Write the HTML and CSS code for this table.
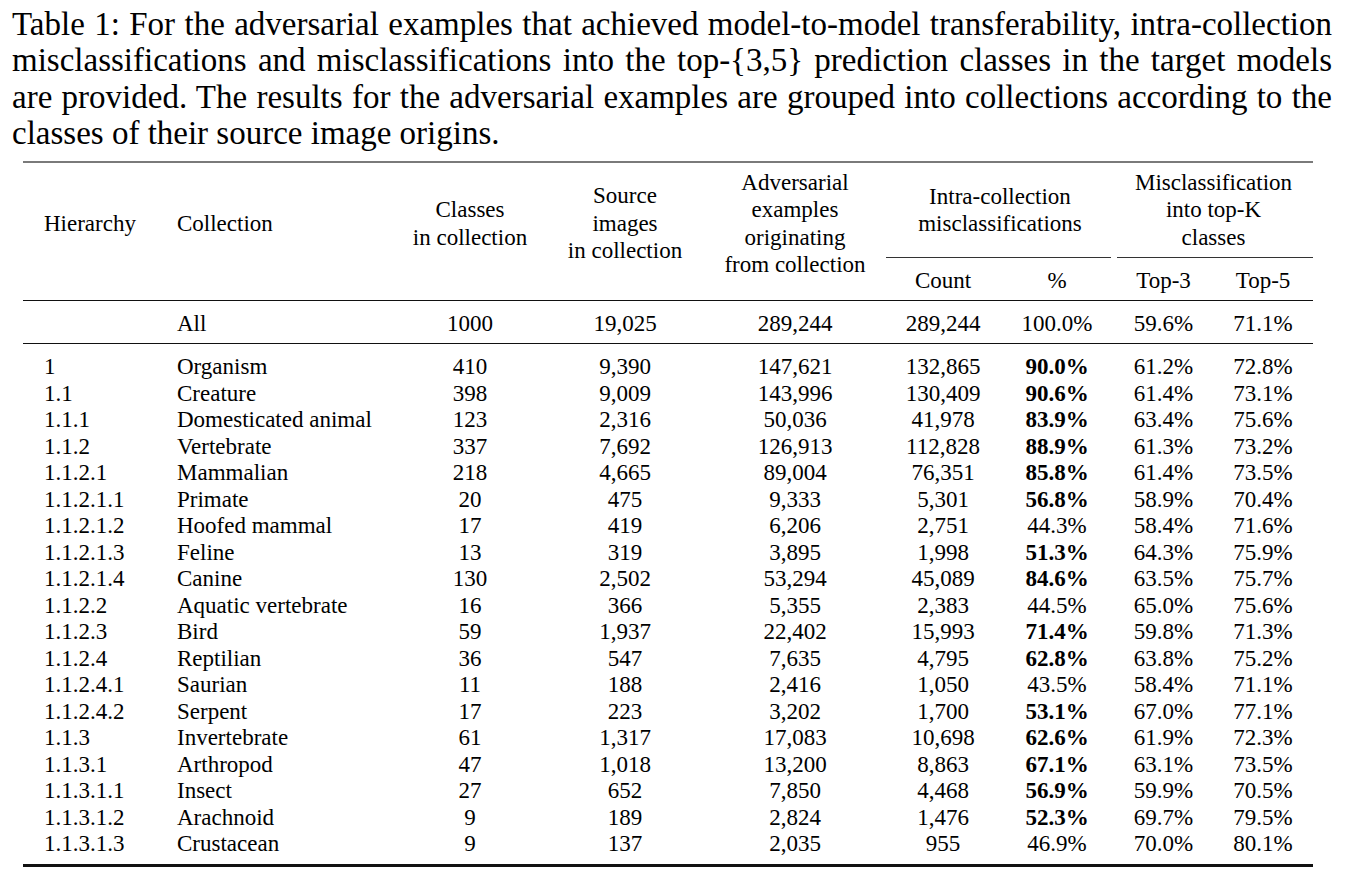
FILE: index.html
```html
<!DOCTYPE html>
<html lang="en">
<head>
<meta charset="utf-8">
<title>Table 1</title>
<link rel="stylesheet" href="styles.css">
</head>
<body>
<div class="page">
  <p class="caption">Table 1: For the adversarial examples that achieved model-to-model transferability, intra-collection misclassifications and misclassifications into the top-{3,5} prediction classes in the target models are provided. The results for the adversarial examples are grouped into collections according to the classes of their source image origins.</p>
  <table class="results">
    <colgroup>
      <col class="c-hier">
      <col class="c-coll">
      <col class="c-classes">
      <col class="c-source">
      <col class="c-adv">
      <col class="c-count">
      <col class="c-pct">
      <col class="c-top3">
      <col class="c-top5">
    </colgroup>
    <thead>
      <tr class="head-main">
        <th rowspan="2" class="left hier span2">Hierarchy</th>
        <th rowspan="2" class="left coll span2">Collection</th>
        <th rowspan="2" class="span2">Classes<br>in collection</th>
        <th rowspan="2" class="span2">Source<br>images<br>in collection</th>
        <th rowspan="2" class="span2">Adversarial<br>examples<br>originating<br>from collection</th>
        <th colspan="2" class="group count">Intra-collection<br>misclassifications</th>
        <th colspan="2" class="group">Misclassification<br>into top-K<br>classes</th>
      </tr>
      <tr class="head-sub">
        <th class="sub sub-count count">Count</th>
        <th class="sub sub-pct">%</th>
        <th class="sub sub-top3">Top-3</th>
        <th class="sub sub-top5">Top-5</th>
      </tr>
    </thead>
    <tbody class="total">
      <tr>
        <td class="left hier"></td>
        <td class="left coll">All</td>
        <td>1000</td>
        <td>19,025</td>
        <td>289,244</td>
        <td class="count">289,244</td>
        <td>100.0%</td>
        <td>59.6%</td>
        <td>71.1%</td>
      </tr>
    </tbody>
    <tbody class="data">
      <tr><td class="left hier">1</td><td class="left coll">Organism</td><td>410</td><td>9,390</td><td>147,621</td><td class="count">132,865</td><td><b>90.0%</b></td><td>61.2%</td><td>72.8%</td></tr>
      <tr><td class="left hier">1.1</td><td class="left coll">Creature</td><td>398</td><td>9,009</td><td>143,996</td><td class="count">130,409</td><td><b>90.6%</b></td><td>61.4%</td><td>73.1%</td></tr>
      <tr><td class="left hier">1.1.1</td><td class="left coll">Domesticated animal</td><td>123</td><td>2,316</td><td>50,036</td><td class="count">41,978</td><td><b>83.9%</b></td><td>63.4%</td><td>75.6%</td></tr>
      <tr><td class="left hier">1.1.2</td><td class="left coll">Vertebrate</td><td>337</td><td>7,692</td><td>126,913</td><td class="count">112,828</td><td><b>88.9%</b></td><td>61.3%</td><td>73.2%</td></tr>
      <tr><td class="left hier">1.1.2.1</td><td class="left coll">Mammalian</td><td>218</td><td>4,665</td><td>89,004</td><td class="count">76,351</td><td><b>85.8%</b></td><td>61.4%</td><td>73.5%</td></tr>
      <tr><td class="left hier">1.1.2.1.1</td><td class="left coll">Primate</td><td>20</td><td>475</td><td>9,333</td><td class="count">5,301</td><td><b>56.8%</b></td><td>58.9%</td><td>70.4%</td></tr>
      <tr><td class="left hier">1.1.2.1.2</td><td class="left coll">Hoofed mammal</td><td>17</td><td>419</td><td>6,206</td><td class="count">2,751</td><td>44.3%</td><td>58.4%</td><td>71.6%</td></tr>
      <tr><td class="left hier">1.1.2.1.3</td><td class="left coll">Feline</td><td>13</td><td>319</td><td>3,895</td><td class="count">1,998</td><td><b>51.3%</b></td><td>64.3%</td><td>75.9%</td></tr>
      <tr><td class="left hier">1.1.2.1.4</td><td class="left coll">Canine</td><td>130</td><td>2,502</td><td>53,294</td><td class="count">45,089</td><td><b>84.6%</b></td><td>63.5%</td><td>75.7%</td></tr>
      <tr><td class="left hier">1.1.2.2</td><td class="left coll">Aquatic vertebrate</td><td>16</td><td>366</td><td>5,355</td><td class="count">2,383</td><td>44.5%</td><td>65.0%</td><td>75.6%</td></tr>
      <tr><td class="left hier">1.1.2.3</td><td class="left coll">Bird</td><td>59</td><td>1,937</td><td>22,402</td><td class="count">15,993</td><td><b>71.4%</b></td><td>59.8%</td><td>71.3%</td></tr>
      <tr><td class="left hier">1.1.2.4</td><td class="left coll">Reptilian</td><td>36</td><td>547</td><td>7,635</td><td class="count">4,795</td><td><b>62.8%</b></td><td>63.8%</td><td>75.2%</td></tr>
      <tr><td class="left hier">1.1.2.4.1</td><td class="left coll">Saurian</td><td>11</td><td>188</td><td>2,416</td><td class="count">1,050</td><td>43.5%</td><td>58.4%</td><td>71.1%</td></tr>
      <tr><td class="left hier">1.1.2.4.2</td><td class="left coll">Serpent</td><td>17</td><td>223</td><td>3,202</td><td class="count">1,700</td><td><b>53.1%</b></td><td>67.0%</td><td>77.1%</td></tr>
      <tr><td class="left hier">1.1.3</td><td class="left coll">Invertebrate</td><td>61</td><td>1,317</td><td>17,083</td><td class="count">10,698</td><td><b>62.6%</b></td><td>61.9%</td><td>72.3%</td></tr>
      <tr><td class="left hier">1.1.3.1</td><td class="left coll">Arthropod</td><td>47</td><td>1,018</td><td>13,200</td><td class="count">8,863</td><td><b>67.1%</b></td><td>63.1%</td><td>73.5%</td></tr>
      <tr><td class="left hier">1.1.3.1.1</td><td class="left coll">Insect</td><td>27</td><td>652</td><td>7,850</td><td class="count">4,468</td><td><b>56.9%</b></td><td>59.9%</td><td>70.5%</td></tr>
      <tr><td class="left hier">1.1.3.1.2</td><td class="left coll">Arachnoid</td><td>9</td><td>189</td><td>2,824</td><td class="count">1,476</td><td><b>52.3%</b></td><td>69.7%</td><td>79.5%</td></tr>
      <tr><td class="left hier">1.1.3.1.3</td><td class="left coll">Crustacean</td><td>9</td><td>137</td><td>2,035</td><td class="count">955</td><td>46.9%</td><td>70.0%</td><td>80.1%</td></tr>
    </tbody>
  </table>
</div>
</body>
</html>
```

FILE: styles.css
```css
html, body {
  margin: 0;
  padding: 0;
  background: #ffffff;
  color: #000000;
  font-family: "Liberation Serif", "Times New Roman", Times, serif;
}

.page {
  padding: 6px 0 0 12px;
}

.caption {
  margin: 0;
  width: 1320px;
  font-size: 33px;
  line-height: 36.3px;
  text-align: justify;
}

.results {
  margin: 10px 0 0 11px;
  width: 1290px;
  table-layout: fixed;
  border-collapse: collapse;
  font-size: 23px;
}

.c-hier { width: 144px; }
.c-coll { width: 233px; }
.c-classes { width: 140px; }
.c-source { width: 170px; }
.c-adv { width: 170px; }
.c-count { width: 120px; }
.c-pct { width: 114px; }
.c-top3 { width: 99px; }
.c-top5 { width: 100px; }

.results th,
.results td {
  padding: 0;
  font-weight: normal;
  text-align: center;
  white-space: nowrap;
}

.results .left { text-align: left; }
.results .hier { padding-left: 21px; }
.results .coll { padding-left: 10px; }
.results .count { padding-left: 6px; }

.results b { font-weight: bold; }

/* header */
.head-main th {
  border-top: 2px solid #7a7a7a;
  line-height: 27.5px;
}
.head-main .group {
  height: 94px;
  vertical-align: middle;
}
.head-main .span2 {
  vertical-align: middle;
  padding-bottom: 16px;
  border-bottom: 1px solid #111;
}

.head-sub th {
  line-height: 26px;
  padding-top: 10.5px;
  padding-bottom: 6.5px;
  vertical-align: middle;
  border-bottom: 1px solid #111;
  background-image: linear-gradient(#333, #333);
  background-repeat: no-repeat;
  background-size: 100% 1px;
  background-position: left top;
}
.head-sub .sub-count {
  background-size: calc(100% - 6px) 1px;
  background-position: right top;
}
.head-sub .sub-pct {
  background-size: calc(100% - 3px) 1px;
  background-position: left top;
}
.head-sub .sub-top3 {
  background-size: calc(100% - 3px) 1px;
  background-position: right top;
}

/* total row */
.total td {
  line-height: 26px;
  padding-top: 10px;
  padding-bottom: 6px;
  vertical-align: middle;
  border-bottom: 1px solid #111;
}

/* data rows */
.data td {
  line-height: 26.5px;
}
.data tr:first-child td {
  padding-top: 10px;
}
.data tr:last-child td {
  padding-bottom: 6px;
  border-bottom: 3px solid #111;
}
```
